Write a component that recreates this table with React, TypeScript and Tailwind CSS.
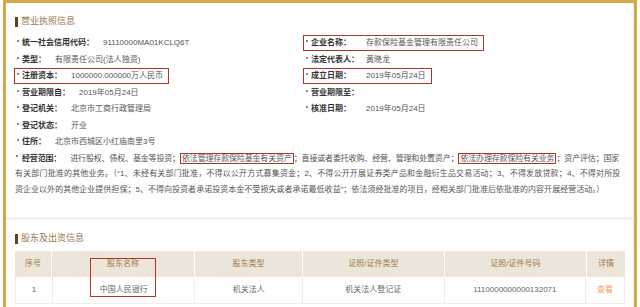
import React from "react";

type Cell = { label: string; value: string; boxed?: boolean } | null;

const rows: [Cell, Cell][] = [
  [
    { label: "统一社会信用代码：", value: "91110000MA01KCLQ6T" },
    { label: "企业名称：", value: "存款保险基金管理有限责任公司", boxed: true },
  ],
  [
    { label: "类型：", value: "有限责任公司(法人独资)" },
    { label: "法定代表人：", value: "黄晓龙" },
  ],
  [
    { label: "注册资本：", value: "1000000.000000万人民币", boxed: true },
    { label: "成立日期：", value: "2019年05月24日", boxed: true },
  ],
  [
    { label: "营业期限自：", value: "2019年05月24日" },
    { label: "营业期限至：", value: "" },
  ],
  [
    { label: "登记机关：", value: "北京市工商行政管理局" },
    { label: "核准日期：", value: "2019年05月24日" },
  ],
  [{ label: "登记状态：", value: "开业" }, null],
  [{ label: "住所：", value: "北京市西城区小红庙南里3号" }, null],
];

function Item({ cell, right }: { cell: Cell; right?: boolean }) {
  if (!cell) return <div />;
  return (
    <div
      className={`flex items-center h-[16px] w-fit pl-[2px] pr-[5px] border ${
        cell.boxed ? "border-[#b8322a]" : "border-transparent"
      }`}
    >
      <span className="w-[2px] h-[2px] bg-[#888] -translate-y-[2px]" />
      <span
        className={`ml-[3px] font-bold text-[#333] whitespace-nowrap ${
          right ? "w-[55px]" : ""
        }`}
      >
        {cell.label}
      </span>
      <span className={`text-[#555] whitespace-nowrap ${right ? "" : "ml-[9px]"}`}>
        {cell.value}
      </span>
    </div>
  );
}

function Heading({ text }: { text: string }) {
  return (
    <div className="flex items-center h-[12px]">
      <span className="w-[3px] h-[10px] bg-[#6b3d1e]" />
      <span className="ml-[3px] text-[9px] text-[#9b7650]">{text}</span>
    </div>
  );
}

const cols = [
  { title: "序号", w: "w-[37px]", v: "1" },
  { title: "股东名称", w: "w-[143px]", v: "中国人民银行" },
  { title: "股东类型", w: "w-[108px]", v: "机关法人" },
  { title: "证照/证件类型", w: "w-[142px]", v: "机关法人登记证" },
  { title: "证照/证件号码", w: "w-[142px]", v: "1110000000000132071" },
  { title: "详情", w: "w-[38px]", v: "查看" },
];

export default function App() {
  return (
    <div
      className="w-[640px] h-[307px] overflow-hidden bg-white text-[8px]"
      style={{ fontFamily: '"Liberation Sans", "Noto Sans CJK SC", sans-serif' }}
    >
      <div className="ml-[3px] w-[634px] h-[307px] border-t-[3px] border-x-[3px] border-[#d6a74b]">
        <div className="h-full border-r border-[#eeeeee]">
          {/* Section 1 */}
          <div className="pt-[13px] pl-[9px] pb-[20px]">
            <Heading text="营业执照信息" />
            <div className="mt-[7px]">
              {rows.map((r, i) => (
                <div key={i} className="grid grid-cols-[289px_1fr] h-[16.5px] items-center -ml-[1px]">
                  <Item cell={r[0]} />
                  <Item cell={r[1]} right />
                </div>
              ))}
              <div className="leading-[15.5px] text-[#555] whitespace-nowrap -ml-[1px]">
                <div className="flex items-center h-[15.5px] tracking-[-0.16px]">
                  <span className="ml-[2px] w-[2px] h-[2px] bg-[#888] -translate-y-[2px]" />
                  <span className="ml-[4px] font-bold text-[#333]">经营范围：</span>
                  <span className="ml-[9px]">
                    进行股权、债权、基金等投资；
                    <span className="border border-[#b8322a] px-[1px]">依法管理存款保险基金有关资产</span>
                    ；直接或者委托收购、经营、管理和处置资产；
                    <span className="border border-[#b8322a] px-[1px]">依法办理存款保险有关业务</span>
                    ；资产评估；国家
                  </span>
                </div>
                <div className="h-[15.5px] ml-[1px] tracking-[0.17px]">
                  有关部门批准的其他业务。（“1、未经有关部门批准，不得以公开方式募集资金；2、不得公开开展证券类产品和金融衍生品交易活动；3、不得发放贷款；4、不得对所投
                </div>
                <div className="h-[15.5px] ml-[1px] tracking-[0.03px]">
                  资企业以外的其他企业提供担保；5、不得向投资者承诺投资本金不受损失或者承诺最低收益”；依法须经批准的项目，经相关部门批准后依批准的内容开展经营活动。）
                </div>
              </div>
            </div>
          </div>
          <div className="h-[3px] bg-[#f2f2f2]" />
          {/* Section 2 */}
          <div className="pt-[13px] pl-[9px]">
            <Heading text="股东及出资信息" />
            <div className="relative mt-[6px] w-[610px]">
              <div className="flex h-[26px] bg-[#ebe5da]">
                {cols.map((c, i) => (
                  <div
                    key={i}
                    className={`${c.w} flex items-center justify-center text-[#a07a4c] ${
                      i < cols.length - 1 ? "border-r border-white" : ""
                    }`}
                  >
                    {c.title}
                  </div>
                ))}
              </div>
              <div className="flex h-[27px] border-b border-x border-[#eeeeee]">
                {cols.map((c, i) => (
                  <div
                    key={i}
                    className={`${c.w} flex items-center justify-center ${
                      i === cols.length - 1 ? "text-[#f2a35e]" : "text-[#666]"
                    } ${i < cols.length - 1 ? "border-r border-[#eeeeee]" : ""}`}
                  >
                    {c.v}
                  </div>
                ))}
              </div>
              <div className="absolute left-[75px] top-[7px] w-[66px] h-[39px] border border-[#b8322a]" />
            </div>
          </div>
        </div>
      </div>
    </div>
  );
}
